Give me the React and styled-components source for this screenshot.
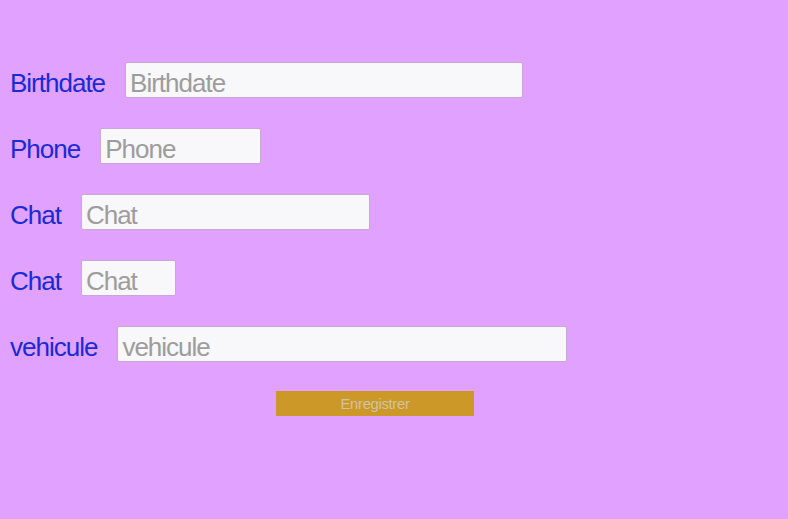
import React from "react";
import styled, { createGlobalStyle } from "styled-components";

const GlobalStyle = createGlobalStyle`
  html, body {
    margin: 0;
    padding: 0;
    background: #e0a2fe;
    font-family: "Liberation Sans", Arial, sans-serif;
  }
`;

const Page = styled.div`
  width: 788px;
  height: 519px;
  background: #e0a2fe;
  box-sizing: border-box;
  padding: 62px 0 0 10px;
`;

const Form = styled.form`
  display: flex;
  flex-direction: column;
  gap: 30px;
`;

const Row = styled.div`
  display: flex;
  align-items: baseline;
  height: 36px;
`;

const Label = styled.label`
  font-family: "Liberation Sans", Arial, sans-serif;
  font-size: 26px;
  letter-spacing: -1px;
  color: #1a2ad4;
  margin-right: 20px;
`;

const Field = styled.input`
  box-sizing: border-box;
  width: ${(p) => p.$w}px;
  height: 36px;
  margin: 0;
  padding: 7px 4px 0;
  border: 1px solid #c9a6d6;
  border-radius: 2px;
  background: #f8f7f9;
  font-family: "Liberation Sans", Arial, sans-serif;
  font-size: 26px;
  letter-spacing: -1px;
  color: #333;
  outline: none;

  &::placeholder {
    color: #9d9d9d;
  }
`;

const Submit = styled.button`
  align-self: flex-start;
  margin: -1px 0 0 266px;
  width: 198px;
  height: 25px;
  padding: 0;
  border: none;
  background: #cc9827;
  color: #d0c3a6;
  font-family: "Liberation Sans", Arial, sans-serif;
  font-size: 15px;
  letter-spacing: -0.4px;
`;

const fields = [
  { name: "Birthdate", w: 398 },
  { name: "Phone", w: 161 },
  { name: "Chat", w: 289 },
  { name: "Chat", w: 95 },
  { name: "vehicule", w: 450 },
];

export default function App() {
  return (
    <Page>
      <GlobalStyle />
      <Form onSubmit={(e) => e.preventDefault()}>
        {fields.map((f, i) => (
          <Row key={i}>
            <Label>{f.name}</Label>
            <Field $w={f.w} placeholder={f.name} />
          </Row>
        ))}
        <Submit type="submit">Enregistrer</Submit>
      </Form>
    </Page>
  );
}
